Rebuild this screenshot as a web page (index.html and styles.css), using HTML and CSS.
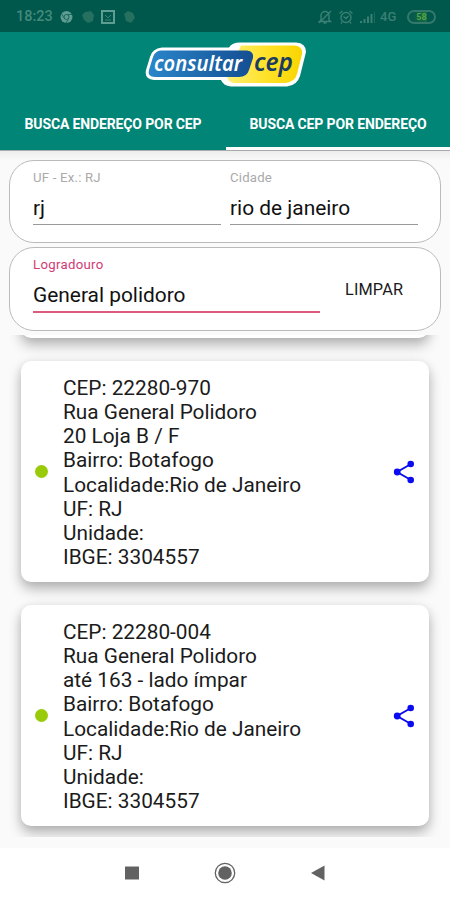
FILE: index.html
```html
<!DOCTYPE html>
<html lang="pt-BR">
<head>
<meta charset="utf-8">
<title>Consultar CEP</title>
<link rel="stylesheet" href="styles.css">
</head>
<body>
<div class="app">
  <div class="status">
    <span class="time">18:23</span>
    <svg class="notif" width="76" height="14" viewBox="0 0 76 14">
      <circle cx="6.5" cy="7" r="6" fill="#5f9c92"/>
      <circle cx="6.5" cy="7" r="2.5" fill="none" stroke="#1d6a5e"/>
      <path d="M6.5 4.5H12M4.3 8.3L1.7 4M8.7 8.3L6 13" stroke="#1d6a5e"/>
      <path d="M22 5l3-3 6-1 3 4-1 6-5 2-4-3z" fill="#25705f"/>
      <rect x="42" y="1" width="12" height="12" fill="none" stroke="#5f9c92" stroke-width="2"/>
      <path d="M45 5l3 3 3-3M45 10h6" fill="none" stroke="#438679"/>
      <path d="M64 4l4-3 5 2 2 5-4 5-5-2z" fill="#25705f"/>
    </svg>
    <span class="spacer"></span>
    <svg class="signals" width="60" height="16" viewBox="0 0 60 16">
      <g fill="none" stroke="#3a8074" stroke-width="1.4">
        <path d="M4 11V6.5a4 4 0 0 1 8 0V11l1.500 1.500H2.500zM6.500 14h3M2 14L14 2"/>
        <circle cx="29" cy="8.500" r="5"/>
        <path d="M26.500 7.500l2.500 2 2.500-2.500M22.500 4.500L25.500 2M32.500 2l3 2.500M25 13l-1 1.500M33 13l1 1.500"/>
      </g>
      <path d="M43 12h2v2h-2zM46.500 10h2v4h-2zM50 7.500h2V14h-2zM53.500 5h2v9h-2z" fill="#3a8074"/>
      <path d="M57.500 3V14" stroke="#1d6a5e"/>
    </svg>
    <span class="net">4G</span>
    <span class="battery">58</span>
  </div>
  <header class="appbar">
    <svg class="logo" width="164" height="46" viewBox="0 0 164 46">
      <defs>
        <linearGradient id="blue" x1="0" x2="1"><stop offset="0" stop-color="#2a86c9"/><stop offset="1" stop-color="#144e92"/></linearGradient>
        <linearGradient id="yellow" x1="0" x2="1"><stop offset="0" stop-color="#ffef76"/><stop offset=".5" stop-color="#ffe22b"/><stop offset="1" stop-color="#f9d500"/></linearGradient>
      </defs>
      <path d="M97 1.500H153Q163 2 163 11L157 35Q154 44.500 144 45.500H88Q80 44.500 78 39H11Q1 38 3 29L7 16Q9 7.500 19 6.500H86Q89 1.500 97 1.500Z" fill="#fff"/>
      <path d="M98 4.500H151Q160 5 159 13L154 33Q152 41 142 42H92Q86 42 84 36Z" fill="url(#yellow)"/>
      <path d="M18 9.500H104Q111 10 110 17L106 29Q104 36 96 36H12Q4 36 6 29L10 16Q12 10 18 9.500Z" fill="url(#blue)"/>
      <text class="logo-text" x="11" y="30" textLength="88" lengthAdjust="spacingAndGlyphs" fill="#fff">consultar</text>
      <text class="logo-text logo-cep" x="111" y="30" textLength="39" lengthAdjust="spacingAndGlyphs" fill="#1b3c60">cep</text>
    </svg>
  </header>
  <nav class="tabs">
    <div class="tab">BUSCA ENDEREÇO POR CEP</div>
    <div class="tab active">BUSCA CEP POR ENDEREÇO</div>
  </nav>
  <main class="content">
    <section class="panel">
      <div class="field uf"><label>UF - Ex.: RJ</label><div class="value">rj</div></div>
      <div class="field city"><label>Cidade</label><div class="value">rio de janeiro</div></div>
    </section>
    <section class="panel second">
      <div class="field focused"><label>Logradouro</label><div class="value">General polidoro</div></div>
      <div class="clear">LIMPAR</div>
    </section>
    <div class="list">
      <article class="card previous"></article>
      <article class="card">
        <span class="dot"></span>
        <div class="address">CEP: 22280-970<br>Rua General Polidoro<br>20 Loja B / F<br>Bairro: Botafogo<br>Localidade:Rio de Janeiro<br>UF: RJ<br>Unidade:<br>IBGE: 3304557</div>
        <svg class="share" width="22" height="24" viewBox="0 0 22 24"><path d="M18 4L4 12L18 20" fill="none" stroke="#0b0bf0" stroke-width="1.900"/><g fill="#0b0bf0"><circle cx="17.700" cy="4" r="3.300"/><circle cx="4.200" cy="12" r="3.400"/><circle cx="17.700" cy="20" r="3.300"/></g></svg>
      </article>
      <article class="card">
        <span class="dot"></span>
        <div class="address">CEP: 22280-004<br>Rua General Polidoro<br>até 163 - lado ímpar<br>Bairro: Botafogo<br>Localidade:Rio de Janeiro<br>UF: RJ<br>Unidade:<br>IBGE: 3304557</div>
        <svg class="share" width="22" height="24" viewBox="0 0 22 24"><path d="M18 4L4 12L18 20" fill="none" stroke="#0b0bf0" stroke-width="1.900"/><g fill="#0b0bf0"><circle cx="17.700" cy="4" r="3.300"/><circle cx="4.200" cy="12" r="3.400"/><circle cx="17.700" cy="20" r="3.300"/></g></svg>
      </article>
    </div>
  </main>
  <footer class="navbar">
    <svg width="14" height="14" viewBox="0 0 14 14"><path d="M0 .5h14v13H0z" fill="#626262"/></svg>
    <svg width="22" height="22" viewBox="0 0 22 22"><circle cx="11" cy="11" r="9.700" fill="none" stroke="#626262" stroke-width="1.300"/><circle cx="11" cy="11" r="6.800" fill="#626262"/></svg>
    <svg width="14" height="16" viewBox="0 0 14 16"><path d="M0 8L13.500 .5v15z" fill="#626262"/></svg>
  </footer>
</div>
</body>
</html>
```
FILE: styles.css
```css
* { box-sizing: border-box; }
body { margin: 0; font-family: Roboto, "Liberation Sans", sans-serif; color: #1b1b1b; }
.app { width: 450px; height: 900px; display: flex; flex-direction: column; overflow: hidden; background: #fafafa; }
.status { height: 32px; background: #00574b; display: flex; align-items: center; padding: 1px 14px 0 16px; flex: none; }
.time { width: 44px; font-size: 14.5px; font-weight: 500; color: #438a7d; }
.spacer { flex: 1; }
.signals { margin-right: 3px; }
.net { font-size: 13px; font-weight: 500; color: #3a8074; width: 27px; }
.battery { width: 29px; height: 14px; border: 2px solid #32796c; border-radius: 7px; font-size: 9px; line-height: 10px; font-weight: 700; text-align: center; color: #55a447; background: linear-gradient(90deg, #06594c 15%, #166c43 70%, #00574b 72%); }
.appbar { height: 66px; background: #008577; display: flex; justify-content: center; flex: none; padding-top: 9px; }
.logo-text { font-family: "Noto Sans", "Open Sans", sans-serif; font-size: 22px; font-style: italic; font-weight: 600; }
.logo-cep { font-size: 25px; }
.tabs { height: 52px; background: #008577; display: grid; grid-template-columns: 1fr 1fr; flex: none; }
.tab { display: flex; align-items: center; justify-content: center; color: #fff; font-size: 14px; font-weight: 700; letter-spacing: -.13px; border-bottom: 3px solid transparent; padding: 3px 0 0 1px; white-space: nowrap; }
.tab.active { border-bottom-color: #fff; margin-left: 1px; padding-left: 0; }
.content { height: 698px; border-top: 1px solid #a7aaaa; display: flex; flex-direction: column; flex: none; background: linear-gradient(#ededed, #fafafa 10px); }
.panel { width: 432px; height: 83px; margin: 9px 0 0 9px; border: 1px solid #bbb; border-radius: 25px; background: #fff; display: flex; flex: none; padding: 8px 22px 0 23px; }
.panel.second { height: 84px; margin-top: 4px; }
.field { width: 188px; }
.field.city { margin-left: 9px; }
.field label { display: block; font-size: 13.2px; line-height: 17px; letter-spacing: .2px; color: #aaa; }
.value { height: 39px; padding-top: 10px; border-bottom: 1px solid #999; font-size: 20.9px; line-height: 25px; color: #111; white-space: nowrap; }
.field.focused { width: 287px; }
.focused label { color: #d13b74; letter-spacing: .3px; }
.focused .value { height: 40px; border-bottom: 2px solid #dc5a80; }
.clear { margin: 24px 0 0 25px; font-size: 16.3px; line-height: 19px; font-weight: 400; letter-spacing: .15px; height: 20px; }
.list { margin: 4px 9px 0; height: 502px; overflow: hidden; padding: 0 12px; display: flex; flex-direction: column; gap: 23px; flex: none; }
.card { width: 408px; height: 221px; background: #fff; border-radius: 10px; box-shadow: 0 7px 13px rgba(0,0,0,.27), 0 1px 8px rgba(0,0,0,.08); display: flex; align-items: center; padding: 0 14px; flex: none; }
.card.previous { margin-top: -218px; }
.dot { width: 13px; height: 13px; border-radius: 50%; background: #99cb0b; margin-right: 15px; }
.address { flex: 1; padding-top: 2px; font-size: 20.8px; line-height: 24.15px; white-space: nowrap; }
.navbar { height: 52px; background: #fff; display: flex; align-items: center; padding: 0 125px 2px; justify-content: space-between; }
```
